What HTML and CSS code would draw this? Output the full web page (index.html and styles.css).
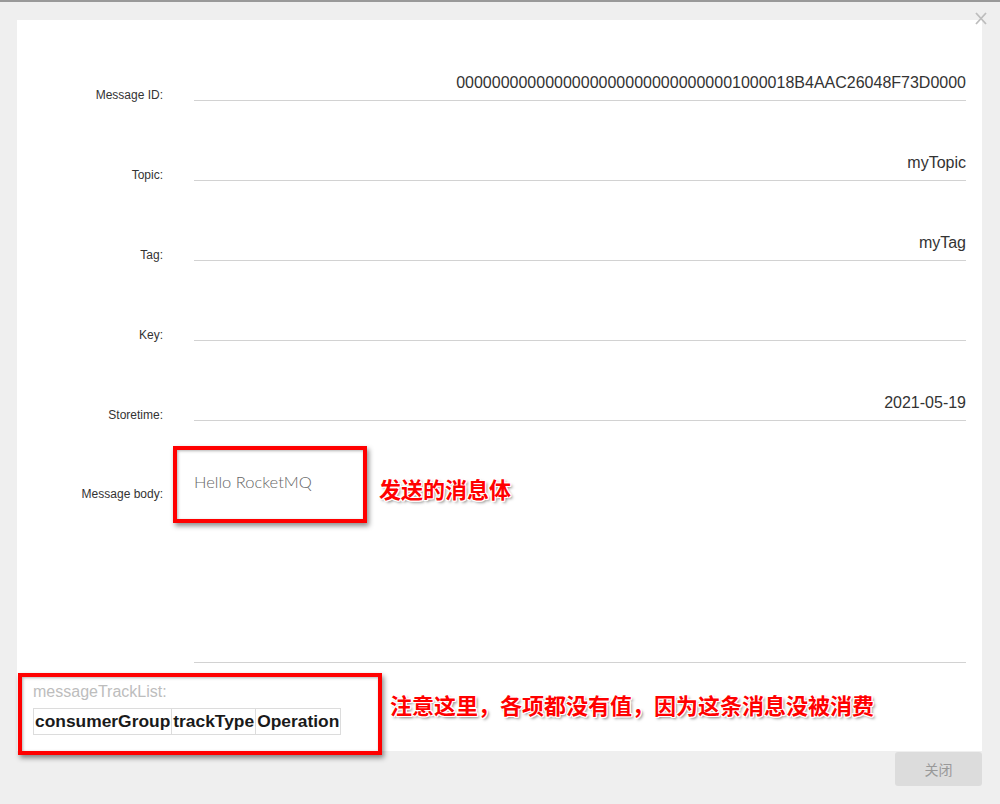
FILE: index.html
```html
<!DOCTYPE html>
<html lang="zh-CN">
<head>
<meta charset="utf-8">
<title>Message Detail</title>
<link rel="stylesheet" href="styles.css">
</head>
<body>
<div class="dialog">
  <svg class="close-x" width="12" height="13" viewBox="0 0 12 13" aria-label="close">
    <path d="M1 1 L11 12 M11 1 L1 12" stroke="#bdbdbd" stroke-width="1.8" fill="none"/>
  </svg>
  <div class="panel">
    <div class="row">
      <div class="label">Message ID:</div>
      <div class="field">00000000000000000000000000000001000018B4AAC26048F73D0000</div>
    </div>
    <div class="row">
      <div class="label">Topic:</div>
      <div class="field">myTopic</div>
    </div>
    <div class="row">
      <div class="label">Tag:</div>
      <div class="field">myTag</div>
    </div>
    <div class="row">
      <div class="label">Key:</div>
      <div class="field"></div>
    </div>
    <div class="row">
      <div class="label">Storetime:</div>
      <div class="field">2021-05-19</div>
    </div>
    <div class="row row-body">
      <div class="label">Message body:</div>
      <div class="field field-body">Hello RocketMQ</div>
    </div>
    <div class="track">
      <div class="track-label">messageTrackList:</div>
      <table class="track-table">
        <tr><th>consumerGroup</th><th>trackType</th><th>Operation</th></tr>
      </table>
    </div>
  </div>
  <div class="footer">
    <button class="btn-close">关闭</button>
  </div>

  <div class="mark mark-body"></div>
  <div class="note note-body">发送的消息体</div>
  <div class="mark mark-track"></div>
  <div class="note note-track">注意这里，各项都没有值，因为这条消息没被消费</div>
</div>
</body>
</html>
```
FILE: styles.css
```css
html, body {
  margin: 0;
  padding: 0;
}
body {
  background: #efefef;
  font-family: "Liberation Sans", Arial, sans-serif;
  color: #333;
}
.dialog {
  position: relative;
  height: 804px;
  box-sizing: border-box;
  border-top: 2px solid #999;
  overflow: hidden;
}
.close-x {
  position: absolute;
  left: 975px;
  top: 10px;
}
.panel {
  margin: 18px 18px 0 17px;
  padding-top: 1px;
  height: 731px;
  background: #fff;
  box-sizing: border-box;
}
.row {
  display: flex;
  align-items: flex-end;
  height: 80px;
}
.label {
  width: 146px;
  flex: none;
  text-align: right;
  font-size: 12px;
  line-height: 12px;
  color: #333;
}
.field {
  margin-left: 31px;
  width: 772px;
  flex: none;
  box-sizing: border-box;
  border-bottom: 1px solid #d2d2d2;
  text-align: right;
  font-size: 16px;
  line-height: 20px;
  height: 28px;
  padding-bottom: 7px;
  color: #333;
}
.row-body {
  height: 242px;
  align-items: flex-start;
}
.row-body .label {
  padding-top: 67px;
}
.field-body {
  height: 242px;
  text-align: left;
  padding-top: 51px;
  font-family: Lato, "Open Sans", sans-serif;
  font-weight: 300;
  font-size: 16.5px;
  color: #666;
}
.track {
  padding: 20px 0 0 16px;
}
.track-label {
  font-size: 16px;
  line-height: 18px;
  color: #bdbdbd;
}
.track-table {
  margin-top: 7px;
  border-collapse: collapse;
}
.track-table th {
  border: 1px solid #dcdcdc;
  padding: 0 1px;
  font-size: 17.4px;
  line-height: 25px;
  font-weight: bold;
  color: #1a1a1a;
  text-align: left;
}
.footer {
  display: flex;
  justify-content: flex-end;
  padding: 1px 18px 0 0;
}
.btn-close {
  width: 87px;
  height: 34px;
  border: none;
  border-radius: 3px;
  background: #dcdcdc;
  color: #999;
  font-family: "Noto Sans CJK SC", sans-serif;
  font-size: 14px;
  padding: 0;
}
.mark {
  position: absolute;
  box-sizing: border-box;
  border: 4px solid #ff0000;
  box-shadow: 2px 3px 5px rgba(0, 0, 0, 0.45), inset 1px 1px 3px rgba(0, 0, 0, 0.3);
}
.mark-body {
  left: 173px;
  top: 444px;
  width: 194px;
  height: 77px;
}
.mark-track {
  left: 18px;
  top: 671px;
  width: 364px;
  height: 82px;
}
.note {
  position: absolute;
  font-family: "Noto Sans CJK SC", sans-serif;
  font-weight: 700;
  font-size: 22px;
  line-height: 22px;
  color: #ff0000;
  white-space: nowrap;
  text-shadow:
    1px 0 0 #fff, -1px 0 0 #fff, 0 1px 0 #fff, 0 -1px 0 #fff,
    1px 1px 0 #fff, -1px -1px 0 #fff, 1px -1px 0 #fff, -1px 1px 0 #fff,
    2px 2px 3px rgba(0, 0, 0, 0.5);
}
.note-body {
  left: 379px;
  top: 475px;
}
.note-track {
  left: 390px;
  top: 691px;
}
```
